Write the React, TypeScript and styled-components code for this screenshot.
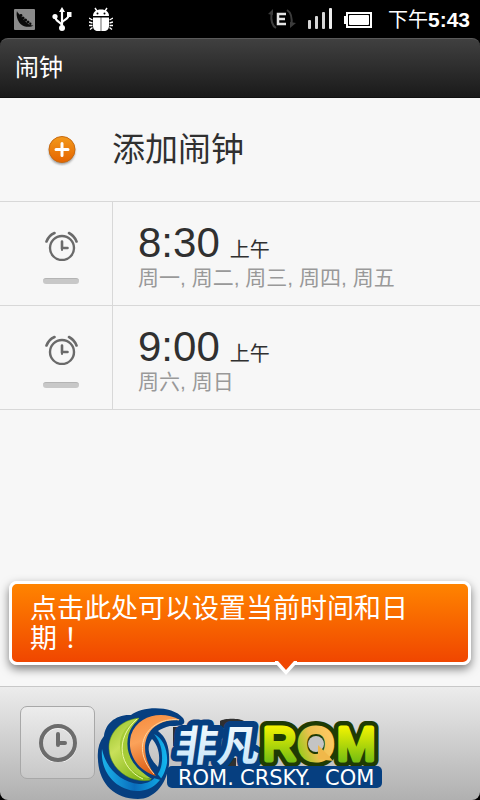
import React from "react";
import styled, { createGlobalStyle } from "styled-components";

const GlobalStyle = createGlobalStyle`
  * { box-sizing: border-box; }
  body { margin: 0; background: #000; }
  button { font: inherit; color: inherit; border: 0; padding: 0; margin: 0; background: none; text-align: left; cursor: pointer; }
`;

const Screen = styled.div`
  min-height: 100vh;
  display: flex;
  flex-direction: column;
  background: #000;
  font-family: "Liberation Sans", "Noto Sans CJK SC", sans-serif;
  color: #303030;
`;

const StatusBar = styled.div`
  height: 38px;
  flex: none;
  display: flex;
  align-items: center;
  justify-content: space-between;
  padding: 0 10px 0 14px;
  color: #fff;
`;

const StatusGroup = styled.div<{ $gap: number }>`
  display: flex;
  align-items: center;
  gap: ${(p) => p.$gap}px;
`;

const Clock = styled.div`
  font-size: 21px;
  line-height: 24px;
  padding: 2px 0 0 4px;
  white-space: nowrap;
`;

const Period = styled.span`
  font-size: 20px;
`;

const Header = styled.header`
  height: 60px;
  flex: none;
  display: flex;
  align-items: center;
  padding: 0 15px;
  border-radius: 8px 8px 0 0;
  border-top: 1px solid #5a5a5a;
  border-bottom: 1px solid #111;
  background: linear-gradient(#404040, #1a1a1a);
`;

const Title = styled.h1`
  margin: 0;
  font-size: 24px;
  line-height: 30px;
  font-weight: 400;
  color: #fff;
`;

const Main = styled.main`
  flex: 1;
  display: flex;
  flex-direction: column;
  background: #f7f7f7;
`;

const AddRow = styled.button`
  height: 104px;
  display: flex;
  align-items: center;
  border-bottom: 1px solid #d8d8d8;
  font-size: 33px;
  line-height: 40px;
`;

const AddIcon = styled.span`
  width: 112px;
  display: flex;
  justify-content: center;
  padding-left: 11px;
`;

const AlarmList = styled.ul`
  list-style: none;
  margin: 0;
  padding: 0;
`;

const AlarmRow = styled.li`
  height: 104px;
  display: flex;
  border-bottom: 1px solid #d8d8d8;
`;

const Toggle = styled.button`
  width: 113px;
  display: flex;
  flex-direction: column;
  align-items: center;
  gap: 17px;
  padding: 27px 0 0 10px;
  border-right: 1px solid #d8d8d8;
`;

const ToggleBar = styled.span`
  width: 36px;
  height: 6px;
  border-radius: 3px;
  background: #c8c8c8;
  border-top: 1px solid #b4b4b4;
`;

const AlarmInfo = styled.button`
  flex: 1;
  display: flex;
  flex-direction: column;
  padding: 17px 0 0 25px;
`;

const AlarmTime = styled.span`
  display: flex;
  align-items: baseline;
  gap: 10px;
  font-size: 42px;
  line-height: 48px;
  height: 47px;
`;

const Meridiem = styled.span`
  font-size: 20px;
`;

const Days = styled.span`
  font-size: 21px;
  line-height: 24px;
  color: #999;
`;

const Hint = styled.div`
  position: relative;
  margin: auto 9px 21px;
  padding: 10px 48px 8px 18px;
  border: 3px solid #fff;
  border-radius: 8px;
  background: linear-gradient(#ff8400, #f04600);
  box-shadow: 0 4px 10px rgba(0, 0, 0, 0.5);
  color: #fff;
  font-size: 27px;
  line-height: 30px;
`;

const HintText = styled.p`
  margin: 0;
`;

const Mark = styled.span`
  font-family: "Liberation Sans", "Noto Sans CJK TC", sans-serif;
`;

const HintPointer = styled.svg`
  position: absolute;
  left: 60%;
  bottom: -15px;
  margin-left: -11px;
`;

const Footer = styled.footer`
  position: relative;
  flex: none;
  display: flex;
  padding: 19px 20px 21px;
  border-top: 1px solid #c8c8c8;
  border-radius: 0 0 8px 8px;
  background: linear-gradient(#ececec, #b0b0b0);
`;

const FooterWrap = styled.div`
  background: linear-gradient(#f7f7f7 50%, #000 50%);
`;

const ClockButton = styled.button`
  width: 75px;
  height: 73px;
  display: flex;
  align-items: center;
  justify-content: center;
  border: 1px solid #a8a8a8;
  border-radius: 7px;
  background: linear-gradient(#ececec, #c8c8c8);
`;

const Logo = styled.svg`
  position: absolute;
  left: 96px;
  bottom: 0;
`;

const PeaIcon = () => (
  <svg width="21" height="21" viewBox="0 0 21 21">
    <rect width="21" height="21" rx="1" fill="#8b8b8b" />
    <path d="M3 2C3 3 5 5 6 6C8 8 9 11 12 13C14 15 17 17 19.500 16.500C17 18.500 10 18.500 6.500 15C3 11 2 6 3 2Z" fill="#0a0a0a" />
    <g fill="#0a0a0a">
      <circle cx="7" cy="6.500" r="1.400" />
      <circle cx="9" cy="9" r="1.600" />
      <circle cx="11.500" cy="11" r="1.600" />
      <circle cx="14" cy="13" r="1.500" />
      <circle cx="16.300" cy="14.800" r="1.200" />
    </g>
  </svg>
);

const UsbIcon = () => (
  <svg width="20" height="26" viewBox="0 0 20 26" fill="none" stroke="#fff" strokeWidth="2.2">
    <path d="M10 21V4M10 20C10 16 3 16 3 10M10 17C10 14 17 14 17 8" />
    <path d="M7 6L10 1L13 6Z" fill="#fff" stroke="none" />
    <circle cx="3" cy="10.500" r="2.600" fill="#fff" stroke="none" />
    <rect x="15" y="6" width="4.500" height="5" fill="#fff" stroke="none" />
    <circle cx="10" cy="22" r="3" fill="#fff" stroke="none" />
  </svg>
);

const BugIcon = () => (
  <svg width="24" height="24" viewBox="0 0 24 24" fill="#fff">
    <path d="M6 1L8 4M18 1L16 4" stroke="#fff" strokeWidth="1.400" />
    <path d="M4 9C4 5 7 2.500 12 2.500S20 5 20 9Z" />
    <path d="M4 10.500H11.700V24H9C6 24 4 22 4 19ZM12.300 10.500H20V19C20 22 18 24 15 24H12.300Z" />
    <path d="M3.500 13L0 11M3.500 16L0 15M3.500 18.500H0M3.500 20.500L1 22.500M20.500 13L24 11M20.500 16L24 15M20.500 18.500H24M20.500 20.500L23 22.500" stroke="#fff" strokeWidth="1.400" />
    <circle cx="8.500" cy="6.500" r="1" fill="#000" />
    <circle cx="15.500" cy="6.500" r="1" fill="#000" />
  </svg>
);

const EdgeIcon = () => (
  <svg width="28" height="20" viewBox="0 0 28 20" fill="none">
    <path d="M8 19C3 16 3 9 3.500 4M19 1C24 4 24 11 23.500 16" stroke="#3c3c3c" strokeWidth="2" />
    <path d="M0 5L5 0V6ZM28 14L22 19V13Z" fill="#3c3c3c" />
    <path d="M18 5H10V15H18M10 10H17" stroke="#e4e4e4" strokeWidth="2.500" />
  </svg>
);

const SignalIcon = () => (
  <svg width="24" height="22" viewBox="0 0 24 22" fill="#d6d6d6">
    <rect x="0" y="12" width="3" height="9" rx="1" />
    <rect x="7" y="8" width="3" height="13" rx="1" />
    <rect x="14" y="4" width="3" height="17" rx="1" />
    <rect x="21" y="0" width="3" height="21" rx="1" fill="#eee" />
  </svg>
);

const BatteryIcon = () => (
  <svg width="28" height="18" viewBox="0 0 28 18">
    <rect x="3" y="3" width="24" height="14" stroke="#fff" strokeWidth="2" />
    <rect x="0" y="6" width="2" height="8" fill="#fff" />
    <rect x="5" y="5" width="20" height="10" rx="1" fill="#fff" />
  </svg>
);

const PlusIcon = () => (
  <svg width="32" height="32" viewBox="0 0 32 32">
    <defs>
      <linearGradient id="plus" x1="0" y1="0" x2="0" y2="1">
        <stop offset="0" stopColor="#f39a1c" />
        <stop offset="1" stopColor="#e56400" />
      </linearGradient>
      <filter id="soft" x="-20%" y="-20%" width="140%" height="150%">
        <feGaussianBlur stdDeviation="1.2" />
      </filter>
    </defs>
    <circle cx="16" cy="17.500" r="13" fill="#777" opacity="0.7" filter="url(#soft)" />
    <circle cx="16" cy="15.500" r="13" fill="url(#plus)" stroke="#c86a10" />
    <path d="M16 9.500V21.500M10 15.500H22" stroke="#fff" strokeWidth="3" strokeLinecap="round" />
  </svg>
);

const AlarmIcon = () => (
  <svg width="34" height="32" viewBox="0 0 34 32" fill="none" stroke="#6a6a6a" strokeLinecap="round">
    <circle cx="18" cy="19" r="12" strokeWidth="2.400" />
    <path d="M18 12.500V19H23.500" strokeWidth="2.600" />
    <path d="M18 19V21" strokeWidth="2" />
    <path d="M2.500 12.500C4 8.500 7 5.500 10.500 4M25 4C28 5.500 31 8.500 32.500 12.500" strokeWidth="2.600" />
  </svg>
);

const ClockIcon = () => (
  <svg width="38" height="38" viewBox="0 0 38 38" fill="none">
    <circle cx="19" cy="20" r="17" stroke="#f4f4f4" strokeWidth="4" />
    <circle cx="19" cy="19" r="17" stroke="#6c6c6c" strokeWidth="4" />
    <path d="M19 10V19H26M19 19V21" stroke="#6c6c6c" strokeWidth="4" strokeLinecap="round" />
  </svg>
);

const RomLogo = () => (
  <Logo width="288" height="94" viewBox="96 706 288 94" role="img" aria-label="非凡ROM ROM.CRSKY.COM">
    <defs>
      <linearGradient id="orange" x1="0" y1="0" x2="0.3" y2="1">
        <stop offset="0" stopColor="#f58a3c" />
        <stop offset="0.45" stopColor="#fba25a" />
        <stop offset="1" stopColor="#d95a12" />
      </linearGradient>
      <linearGradient id="green" x1="0" y1="0" x2="0.6" y2="1">
        <stop offset="0" stopColor="#93bf26" />
        <stop offset="0.45" stopColor="#c8e05a" />
        <stop offset="1" stopColor="#86b81b" />
      </linearGradient>
      <linearGradient id="blue" x1="0" y1="0" x2="1" y2="0">
        <stop offset="0" stopColor="#1bb4ea" />
        <stop offset="0.5" stopColor="#0a6dbc" />
        <stop offset="1" stopColor="#12b6ee" />
      </linearGradient>
      <linearGradient id="ice" x1="0" y1="0" x2="0" y2="1">
        <stop offset="0" stopColor="#fff" />
        <stop offset="1" stopColor="#bfe2f8" />
      </linearGradient>
      <linearGradient id="lime" gradientUnits="userSpaceOnUse" x1="0" y1="726" x2="0" y2="762">
        <stop offset="0" stopColor="#f4f400" />
        <stop offset="1" stopColor="#74bd12" />
      </linearGradient>
      <linearGradient id="gold" gradientUnits="userSpaceOnUse" x1="298" y1="750" x2="330" y2="738">
        <stop offset="0" stopColor="#9cca1c" />
        <stop offset="0.5" stopColor="#ecc050" />
        <stop offset="1" stopColor="#fbc860" />
      </linearGradient>
    </defs>

    <path d="M173 727H178V746H173ZM220 721C224 718 240 718 244 721V728H220ZM226 758H236V769H226Z" fill="#303030" />

    <path d="M98 760C97 750 99 742 104 736C105 724 116 714 131 715C142 706 172 705 183 718C188 726 178 726 170 726C165 727 161 729 158 731C167 738 170 748 169 765C166 786 153 799 138 799C114 799 99 783 98 760ZM152 739C145 748 150 759 158 767C161 756 158 745 152 739Z" fill="#063f80" fillRule="evenodd" />
    <path d="M102 749C106 769 121 782 139 784C154 784 163 772 162 756C162 746 158 739 154 734C163 738 168 750 167 763C164 781 152 791 137 791C114 790 100 770 102 749Z" fill="url(#blue)" />
    <path d="M139 718C120 720 108 734 109 749C110 769 130 784 151 780C130 769 118 743 139 718Z" fill="url(#green)" stroke="#5b9317" strokeWidth="0.5" />
    <path d="M139 718C126 737 128 766 152 779C130 776 114 754 122 735C126 727 131 722 139 718Z" fill="#a6cc36" />
    <path d="M137 719C114 739 119 768 143 779" fill="none" stroke="#eef8a6" />
    <path d="M180 720C162 710 138 715 131 735C126 755 139 771 156 776C136 752 143 718 180 720Z" fill="url(#orange)" stroke="#063f80" strokeWidth="5" paintOrder="stroke" />
    <path d="M179 720C152 716 127 744 154 774" fill="none" stroke="#ffd6a0" />

    <text
      x="281"
      y="761"
      transform="skewX(-8)"
      fontFamily="Noto Sans CJK SC, sans-serif"
      fontSize="42"
      fontWeight="700"
      strokeLinejoin="round"
      stroke="#063f80"
      strokeWidth="12"
      fill="url(#ice)"
      paintOrder="stroke"
    >
      非凡
    </text>

    <g fontFamily="Liberation Sans, sans-serif" fontSize="46" strokeLinejoin="round">
      <g stroke="#1f3b04" strokeWidth="14" fill="#1f3b04" aria-hidden="true">
        <text x="263" y="760">R</text>
        <text x="298" y="760">O</text>
        <text x="337" y="760">M</text>
      </g>
      <g fill="url(#lime)" stroke="url(#lime)" strokeWidth="5">
        <text x="263" y="760">R</text>
        <text x="298" y="760" fill="url(#gold)" stroke="url(#gold)">O</text>
        <text x="337" y="760">M</text>
      </g>
      <circle cx="316" cy="744" r="8" fill="#c4c4c4" />
      <path d="M318 745L322 749L328 755L333 761L318 759Z" fill="#f0b84a" />
    </g>

    <rect x="167" y="766" width="215" height="22" rx="5" fill="#063f80" />
    <g fontFamily="DejaVu Sans, sans-serif" fontSize="21" fill="#fff">
      <text x="178" y="785">ROM.</text>
      <text x="240" y="785">CRSKY.</text>
      <text x="325" y="785">COM</text>
    </g>
  </Logo>
);

const alarms = [
  { time: "8:30", meridiem: "上午", days: "周一, 周二, 周三, 周四, 周五" },
  { time: "9:00", meridiem: "上午", days: "周六, 周日" },
];

export default function App() {
  return (
    <Screen lang="zh-CN">
      <GlobalStyle />
      <StatusBar>
        <StatusGroup $gap={17}>
          <PeaIcon />
          <UsbIcon />
          <BugIcon />
        </StatusGroup>
        <StatusGroup $gap={12}>
          <EdgeIcon />
          <SignalIcon />
          <BatteryIcon />
          <Clock>
            <Period>下午</Period>
            <b>5:43</b>
          </Clock>
        </StatusGroup>
      </StatusBar>
      <Header>
        <Title>闹钟</Title>
      </Header>
      <Main>
        <AddRow type="button">
          <AddIcon>
            <PlusIcon />
          </AddIcon>
          添加闹钟
        </AddRow>
        <AlarmList>
          {alarms.map((a) => (
            <AlarmRow key={a.time}>
              <Toggle type="button" aria-label={a.time} aria-pressed={false}>
                <AlarmIcon />
                <ToggleBar />
              </Toggle>
              <AlarmInfo type="button">
                <AlarmTime>
                  {a.time}
                  <Meridiem>{a.meridiem}</Meridiem>
                </AlarmTime>
                <Days>{a.days}</Days>
              </AlarmInfo>
            </AlarmRow>
          ))}
        </AlarmList>
        <Hint role="status">
          <HintText>
            点击此处可以设置当前时间和日期<Mark lang="zh-TW">！</Mark>
          </HintText>
          <HintPointer width="22" height="16" viewBox="0 0 22 16">
            <path d="M0 2L11 14L22 2V0H0Z" fill="#fff" />
            <path d="M3 0L11 9L19 0Z" fill="#f04600" />
          </HintPointer>
        </Hint>
      </Main>
      <FooterWrap>
        <Footer>
          <ClockButton type="button" aria-label="时钟">
            <ClockIcon />
          </ClockButton>
          <RomLogo />
        </Footer>
      </FooterWrap>
    </Screen>
  );
}
